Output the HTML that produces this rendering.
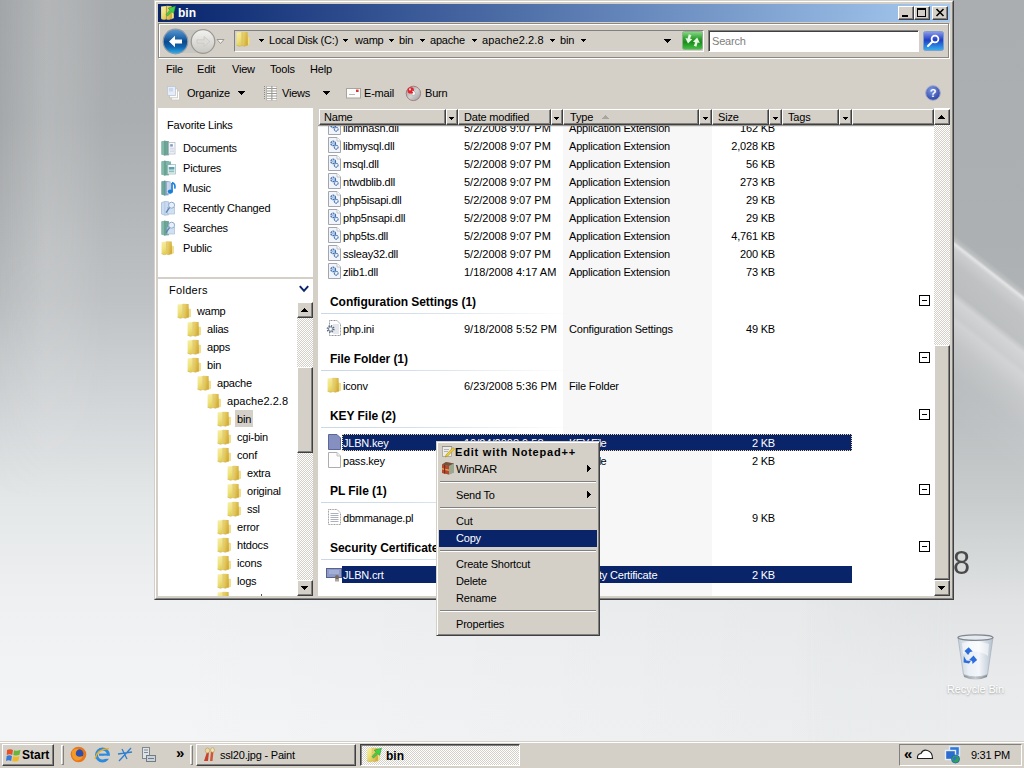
<!DOCTYPE html>
<html><head><meta charset="utf-8"><title>bin</title>
<style>
*{box-sizing:border-box;margin:0;padding:0}
html,body{width:1024px;height:768px;overflow:hidden}
body{position:relative;font-family:"Liberation Sans",sans-serif;font-size:11px;color:#000;letter-spacing:-0.2px;
 background:linear-gradient(180deg,#a8abad 0px,#abaeb0 120px,#b3b6b8 200px,#bfc2c4 300px,#d2d5d7 400px,#e4e7e8 500px,#eef0f1 600px,#f2f4f5 700px,#f3f5f6 768px);}
.a{position:absolute}
.t{position:absolute;white-space:nowrap;line-height:14px;height:14px}
.b{font-weight:bold}
.w{color:#fff}
.r{text-align:right}
#win{position:absolute;left:154px;top:0;width:800px;height:600px;background:#d4d0c8;
 border:1px solid;border-color:#d4d0c8 #404040 #404040 #d4d0c8;}
#win:before{content:"";position:absolute;left:0;top:0;right:0;bottom:0;border:1px solid;border-color:#fff #808080 #808080 #fff}
#title{position:absolute;left:158px;top:4px;width:792px;height:18px;background:linear-gradient(90deg,#0a246a 0%,#0d2a72 4%,#a6caf0 100%)}
.cb{position:absolute;top:6px;width:16px;height:14px;background:#d4d0c8;border:1px solid;border-color:#fff #404040 #404040 #fff;box-shadow:inset -1px -1px 0 #808080}
.btn{position:absolute;background:#d4d0c8;border:1px solid;border-color:#fff #404040 #404040 #fff;box-shadow:inset -1px -1px 0 #808080}
.sunk{position:absolute;border:1px solid;border-color:#808080 #fff #fff #808080}
.sunk2{position:absolute;border:1px solid;border-color:#808080 #fff #fff #808080;box-shadow:inset 1px 1px 0 #404040}
.dither{background-color:#eae8e3;background-image:conic-gradient(#fff 25%,#d4d0c8 0 50%,#fff 0 75%,#d4d0c8 0);background-size:2px 2px}
.hd{position:absolute;top:109px;height:16px;background:#d4d0c8;border:1px solid;border-color:#fff #404040 #404040 #fff;box-shadow:inset -1px -1px 0 #808080}
.arr{position:absolute;width:5px;height:3px;background:linear-gradient(var(--c,#000),var(--c,#000)) 0px 0px/5px 1px no-repeat,linear-gradient(var(--c,#000),var(--c,#000)) 1px 1px/3px 1px no-repeat,linear-gradient(var(--c,#000),var(--c,#000)) 2px 2px/1px 1px no-repeat}
.ad7{position:absolute;width:7px;height:4px;background:linear-gradient(var(--c,#000),var(--c,#000)) 0px 0px/7px 1px no-repeat,linear-gradient(var(--c,#000),var(--c,#000)) 1px 1px/5px 1px no-repeat,linear-gradient(var(--c,#000),var(--c,#000)) 2px 2px/3px 1px no-repeat,linear-gradient(var(--c,#000),var(--c,#000)) 3px 3px/1px 1px no-repeat}
.arru{position:absolute;width:7px;height:4px;background:linear-gradient(var(--c,#000),var(--c,#000)) 3px 0px/1px 1px no-repeat,linear-gradient(var(--c,#000),var(--c,#000)) 2px 1px/3px 1px no-repeat,linear-gradient(var(--c,#000),var(--c,#000)) 1px 2px/5px 1px no-repeat,linear-gradient(var(--c,#000),var(--c,#000)) 0px 3px/7px 1px no-repeat}
.ar4{position:absolute;width:4px;height:7px;background:linear-gradient(#000,#000) 0px 0px/1px 1px no-repeat,linear-gradient(#000,#000) 0px 1px/2px 1px no-repeat,linear-gradient(#000,#000) 0px 2px/3px 1px no-repeat,linear-gradient(#000,#000) 0px 3px/4px 1px no-repeat,linear-gradient(#000,#000) 0px 4px/3px 1px no-repeat,linear-gradient(#000,#000) 0px 5px/2px 1px no-repeat,linear-gradient(#000,#000) 0px 6px/1px 1px no-repeat}
.sel{position:absolute;background:#0a246a;height:17px}
.gl{position:absolute;height:1px;background:linear-gradient(90deg,#c9d8e6 0%,#d5e1ec 40%,rgba(255,255,255,0) 100%)}
.sep{position:absolute;height:2px;border-top:1px solid #808080;border-bottom:1px solid #fff}
svg{position:absolute;overflow:visible}
</style></head><body>
<svg width="0" height="0" style="position:absolute"><defs>
<linearGradient id="gf" x1="0" y1="0" x2="0.3" y2="1"><stop offset="0" stop-color="#f7efa6"/><stop offset="0.6" stop-color="#efe27e"/><stop offset="1" stop-color="#e3d15c"/></linearGradient>
<linearGradient id="gf2" x1="0" y1="0" x2="1" y2="0.4"><stop offset="0" stop-color="#ecd676"/><stop offset="0.5" stop-color="#e2c557"/><stop offset="1" stop-color="#d0aa3a"/></linearGradient>
<symbol id="fold" viewBox="0 0 14 16"><path d="M11 6 H13 Q13.8 6 13.8 7 V13.5 L11 14.5 Z" fill="#efdf88" stroke="#e3cf70" stroke-width="0.4"/><path d="M0.6 1.6 L5.8 0.9 V14.6 L3.5 15.3 L0.6 14.2 Z" fill="url(#gf)"/><path d="M6.2 0.7 L11.6 1 L11.9 14 L8.5 15.2 L6.2 14.7 Z" fill="url(#gf2)"/><path d="M6 0.9 V14.7" stroke="#d2b64a" stroke-width="0.7"/><path d="M0.6 14.2 L3.5 15.3 L5.8 14.6 M6.2 14.7 L8.5 15.2 L11.9 14" stroke="#cdb045" stroke-width="0.6" fill="none"/></symbol>
<symbol id="dll" viewBox="0 0 13 16"><path d="M0.5 0.5 H9 L12.5 4 V15.5 H0.5 Z" fill="#f1f5fb" stroke="#a3a6ac" stroke-width="1"/><path d="M9 0.5 V4 H12.5" fill="#fff" stroke="#b5b8be" stroke-width="0.8"/><circle cx="5.2" cy="6.4" r="2.3" fill="#dfe9f6" stroke="#3d6cab" stroke-width="1.25" stroke-dasharray="1.7 0.6"/><circle cx="5.2" cy="6.4" r="0.8" fill="#fff" stroke="#5d88bf" stroke-width="0.6"/><circle cx="8.2" cy="10.2" r="1.9" fill="#e3ecf7" stroke="#4674b2" stroke-width="1.1" stroke-dasharray="1.5 0.5"/><circle cx="8.2" cy="10.2" r="0.6" fill="#fff"/></symbol>
<symbol id="doc" viewBox="0 0 13 16"><path d="M0.5 0.5 H9 L12.5 4 V15.5 H0.5 Z" fill="#fdfdfd" stroke="#adadad" stroke-width="1"/><path d="M9 0.5 V4 H12.5" fill="#f0f0f0" stroke="#b8b8b8" stroke-width="0.8"/></symbol>
</defs></svg>
<div class="a" style="left:154px;top:600px;width:870px;height:141px;background:linear-gradient(90deg,rgba(0,0,0,0) 0%,rgba(0,0,0,0.02) 50%,rgba(0,0,0,0.045) 100%)"></div>
<div class="a" style="left:804px;top:0;width:220px;height:741px;-webkit-mask-image:linear-gradient(90deg,transparent 0,#000 150px);mask-image:linear-gradient(90deg,transparent 0,#000 150px);background:linear-gradient(180deg,#abaeb0 0px,#adb0b2 240px,#b2b5b7 330px,#b9bcbe 400px,#c9cccd 500px,#d6d9da 560px,#e0e2e3 600px,#e8eaeb 680px,#eaeced 741px)"></div>
<div class="a" style="left:954px;top:0;width:70px;height:741px;background:linear-gradient(218deg,rgba(255,255,255,0) 0%,rgba(255,255,255,0) 36.3%,rgba(255,255,255,0.2) 37.1%,rgba(255,255,255,0.66) 37.5%,rgba(255,255,255,0.36) 38.1%,rgba(255,255,255,0.2) 40%,rgba(255,255,255,0.14) 43.4%,rgba(255,255,255,0.42) 44.4%,rgba(255,255,255,0.3) 46.4%,rgba(255,255,255,0.38) 47.2%,rgba(255,255,255,0.2) 50%,rgba(255,255,255,0.06) 54%,rgba(255,255,255,0) 60%)"></div>
<div class="a" style="left:0;top:0;width:154px;height:500px;background:linear-gradient(90deg,rgba(0,0,0,0.03) 0%,rgba(255,255,255,0.13) 30%,rgba(255,255,255,0.1) 45%,rgba(255,255,255,0) 70%);-webkit-mask-image:linear-gradient(180deg,#000 0%,#000 50%,transparent 100%);mask-image:linear-gradient(180deg,#000 0%,#000 50%,transparent 100%)"></div>
<div class="t " style="left:953px;top:562px;font-size:33px;line-height:33px;height:33px;top:546px;color:#4a4a4a;letter-spacing:0;transform:scaleX(0.93);transform-origin:0 0">8</div>
<svg style="left:957px;top:634px" width="37" height="46" viewBox="0 0 37 46"><defs><linearGradient id="rb" x1="0" y1="0" x2="1" y2="0"><stop offset="0" stop-color="#c3ced9"/><stop offset="0.3" stop-color="#e9eff5"/><stop offset="0.6" stop-color="#f3f6fa"/><stop offset="1" stop-color="#b4c0cd"/></linearGradient><linearGradient id="rbb" x1="0" y1="0" x2="1" y2="0"><stop offset="0" stop-color="#8d9298"/><stop offset="0.5" stop-color="#c9cdd2"/><stop offset="1" stop-color="#7f858c"/></linearGradient></defs><path d="M6.5 40 Q18.5 46.5 30.5 40 L30 43 Q18.5 48 7 43 Z" fill="url(#rbb)"/><path d="M1 3.5 L36 3.5 L30.5 40.5 Q18.5 45.5 6.5 40.5 Z" fill="url(#rb)" stroke="#a9b4c0" stroke-width="0.8"/><path d="M5 9 Q18 5 32 10 L31 22 Q20 14 6 20 Z" fill="#fff" opacity="0.55"/><ellipse cx="18.5" cy="3.6" rx="17.5" ry="2.8" fill="#e4eaf0" stroke="#80868e" stroke-width="1.3"/><path d="M7.5 17 l4.2 -3.8 l4 4.4 l-2.6 0.4 l-2 3 z M16.5 21.5 l3.6 4.6 l-4.6 3.8 l-0.4 -2.8 l-3 -1 z M6.8 22 l2.6 4.6 l4.4 0.4 l-1.8 2.6 l-5.4 -1.2 z" fill="#2c6fdc"/></svg>
<div class="t w" style="left:947px;top:682px;letter-spacing:-0.1px;text-shadow:0 1px 2px rgba(0,0,0,.35)">Recycle Bin</div>
<div id="win"></div>
<div id="title"></div>
<svg style="left:160px;top:5px" width="16" height="16" viewBox="0 0 16 16"><use href="#fold" x="0.5" y="0" width="13.5" height="15.5"/><path d="M6 9.5 L10.2 5.2 L8.2 3.2 L15.4 1.2 L13.6 8.4 L11.8 6.6 L7.6 11 Z" fill="#46d04a" stroke="#2a9a34" stroke-width="0.6"/></svg>
<div class="t b w" style="left:178px;top:6px;font-size:12px;letter-spacing:0">bin</div>
<div class="cb" style="left:898px"><div class="a" style="left:3px;top:8px;width:6px;height:2px;background:#000"></div></div>
<div class="cb" style="left:914px"><div class="a" style="left:2px;top:1px;width:9px;height:9px;border:1px solid #000;border-top-width:2px"></div></div>
<div class="cb" style="left:932px"><svg style="left:3px;top:2px" width="8" height="7" viewBox="0 0 8 7"><path d="M0.5 0 L7.5 7 M7.5 0 L0.5 7" stroke="#000" stroke-width="1.6"/></svg></div>
<div class="a" style="left:159px;top:24px;width:791px;height:35px;border:1px solid #fff"></div>
<div class="a" style="left:158px;top:23px;width:791px;height:35px;border:1px solid #8a8780"></div>
<svg style="left:160px;top:27px" width="72" height="29" viewBox="0 0 72 29">
<defs><linearGradient id="bk" x1="0" y1="0" x2="0" y2="1"><stop offset="0" stop-color="#5b97cf"/><stop offset="0.3" stop-color="#2a6fb3"/><stop offset="0.5" stop-color="#0d4a8a"/><stop offset="0.72" stop-color="#0f63ad"/><stop offset="1" stop-color="#2bb4f0"/></linearGradient>
<linearGradient id="fw" x1="0" y1="0" x2="0" y2="1"><stop offset="0" stop-color="#f2f2f0"/><stop offset="1" stop-color="#c9c7c1"/></linearGradient></defs>
<path d="M15 3 H43 V26 H15 Z" fill="#c8c6c0"/>
<circle cx="15.5" cy="14.5" r="12.3" fill="url(#bk)" stroke="#8e9aa8" stroke-width="1.2"/>
<path d="M9 14.5 L15 8.8 V12.4 H22 V16.6 H15 V20.2 Z" fill="#fff"/>
<circle cx="43" cy="14.5" r="11.8" fill="url(#fw)" stroke="#9b9993" stroke-width="1.3"/>
<path d="M50 14.5 L44 9.5 V12.8 H37 V16.2 H44 V19.5 Z" fill="#dddbd6" stroke="#c4c2bc" stroke-width="0.6"/>
<path d="M57 12.5 H64 L60.5 16.5 Z" fill="#f4f4f2" stroke="#8a8882" stroke-width="0.8"/>
</svg>
<div class="sunk" style="left:234px;top:30px;width:470px;height:22px;background:#d4d0c8"></div>
<svg style="left:236px;top:31px" width="14" height="16"><use href="#fold" width="14" height="16"/></svg>
<div class="t " style="left:269px;top:33px;">Local Disk (C:)</div>
<div class="t " style="left:355px;top:33px;">wamp</div>
<div class="t " style="left:399px;top:33px;">bin</div>
<div class="t " style="left:430px;top:33px;">apache</div>
<div class="t " style="left:482px;top:33px;letter-spacing:0.1px">apache2.2.8</div>
<div class="t " style="left:560px;top:33px;">bin</div>
<div class="arr" style="left:259px;top:39px"></div>
<div class="arr" style="left:343px;top:39px"></div>
<div class="arr" style="left:389px;top:39px"></div>
<div class="arr" style="left:420px;top:39px"></div>
<div class="arr" style="left:472px;top:39px"></div>
<div class="arr" style="left:550px;top:39px"></div>
<div class="arr" style="left:581px;top:39px"></div>
<div class="ad7" style="left:664px;top:39px"></div>
<svg style="left:682px;top:31px" width="21" height="19" viewBox="0 0 21 19"><defs><linearGradient id="gr" x1="0" y1="0" x2="0" y2="1"><stop offset="0" stop-color="#8adb88"/><stop offset="0.4" stop-color="#2f9f30"/><stop offset="0.6" stop-color="#1c8c1e"/><stop offset="1" stop-color="#44c644"/></linearGradient></defs><rect x="0.5" y="0.5" width="20" height="18" rx="2" fill="url(#gr)" stroke="#8fb08a"/><path d="M6.8 3.2 L9.4 4.2 L8 7.6 L10.2 8.2 L6 12.4 L3.4 7 L5.6 7.4 Z M14.4 15.8 L11.8 14.8 L13.2 11.4 L11 10.8 L15.2 6.6 L17.8 12 L15.6 11.6 Z" fill="#e9f8e4"/></svg>
<div class="sunk2" style="left:708px;top:30px;width:211px;height:22px;background:#fff"></div>
<div class="t " style="left:712px;top:34px;color:#808080">Search</div>
<svg style="left:923px;top:31px" width="21" height="20" viewBox="0 0 21 20"><defs><linearGradient id="sb" x1="0" y1="0" x2="0" y2="1"><stop offset="0" stop-color="#8f9de8"/><stop offset="0.45" stop-color="#1f3fc4"/><stop offset="1" stop-color="#36b4ee"/></linearGradient></defs><rect x="0.5" y="0.5" width="20" height="19" rx="2" fill="url(#sb)" stroke="#7f9fd0"/><circle cx="12" cy="8" r="3.4" fill="none" stroke="#fff" stroke-width="1.8"/><path d="M9.5 10.5 L5 15" stroke="#fff" stroke-width="2.2" stroke-linecap="round"/></svg>
<div class="t " style="left:166px;top:62px;">File</div>
<div class="t " style="left:197px;top:62px;">Edit</div>
<div class="t " style="left:232px;top:62px;">View</div>
<div class="t " style="left:270px;top:62px;">Tools</div>
<div class="t " style="left:310px;top:62px;">Help</div>
<svg style="left:166px;top:85px" width="16" height="16" viewBox="0 0 16 16"><rect x="5.5" y="6" width="8" height="9" fill="#fff" stroke="#c9c6be" stroke-width="0.8"/><rect x="3.5" y="3.8" width="8" height="9" fill="#fdfdfd" stroke="#c4c2bc" stroke-width="0.8"/><rect x="1.5" y="1.5" width="8" height="9" fill="#e6edf6" stroke="#bcc6d4" stroke-width="0.8"/><rect x="3" y="3" width="4" height="3.5" fill="#c9d8ec"/></svg>
<div class="t " style="left:187px;top:86px;">Organize</div>
<div class="ad7" style="left:238px;top:91px"></div>
<svg style="left:263px;top:85px" width="16" height="16" viewBox="0 0 16 16"><path d="M1.5 1 V15" stroke="#8a8a8a" stroke-width="1" stroke-dasharray="1 1"/><rect x="3.5" y="1" width="10.5" height="14.5" fill="#9b9993"/><g stroke="#fff" stroke-width="1.5"><path d="M4 2.2 H8.3 M9.4 2.2 H13.6 M4 4.7 H8.3 M9.4 4.7 H13.6 M4 7.2 H8.3 M9.4 7.2 H13.6 M4 9.7 H8.3 M9.4 9.7 H13.6 M4 12.2 H8.3 M9.4 12.2 H13.6 M4 14.6 H8.3 M9.4 14.6 H13.6"/></g></svg>
<div class="t " style="left:282px;top:86px;">Views</div>
<div class="ad7" style="left:323px;top:91px"></div>
<svg style="left:346px;top:88px" width="15" height="11" viewBox="0 0 15 11"><rect x="0.5" y="0.5" width="14" height="9.5" fill="#fcfcfc" stroke="#a7a49c"/><rect x="10" y="1.6" width="2.6" height="2.4" fill="#d8323a"/><path d="M3 6.5 H9" stroke="#b9b6b0" stroke-width="1"/></svg>
<div class="t " style="left:364px;top:86px;">E-mail</div>
<svg style="left:405px;top:85px" width="17" height="17" viewBox="0 0 17 17"><defs><linearGradient id="cd" x1="0" y1="0" x2="1" y2="1"><stop offset="0" stop-color="#8f8f8f"/><stop offset="0.5" stop-color="#d2d2d2"/><stop offset="1" stop-color="#9a9a9a"/></linearGradient></defs><circle cx="8.4" cy="8.4" r="7.2" fill="url(#cd)" stroke="#a06a6a" stroke-width="0.8"/><circle cx="8.4" cy="8.4" r="2" fill="#f2f2f2" stroke="#9c9c9c" stroke-width="0.6"/><circle cx="5.8" cy="5.4" r="3.2" fill="#e3232c"/><circle cx="5" cy="4.4" r="1.1" fill="#fbd0d0"/><path d="M7.5 6 Q9.5 7 8.6 9.5" stroke="#fff" stroke-width="1.2" fill="none"/></svg>
<div class="t " style="left:425px;top:86px;">Burn</div>
<svg style="left:925px;top:85px" width="16" height="16" viewBox="0 0 16 16"><defs><radialGradient id="hp" cx="0.4" cy="0.3" r="0.8"><stop offset="0" stop-color="#7f97e0"/><stop offset="1" stop-color="#1f3aa0"/></radialGradient></defs><circle cx="8" cy="8" r="7.3" fill="url(#hp)" stroke="#9aa6cc" stroke-width="1"/><text x="8" y="12" text-anchor="middle" font-family="Liberation Sans,sans-serif" font-weight="bold" font-size="11" fill="#fff" letter-spacing="0">?</text></svg>
<div class="a" style="left:158px;top:108px;width:155px;height:488px;background:#fff"></div>
<div class="t " style="left:167px;top:118px;">Favorite Links</div>
<div class="t " style="left:183px;top:141px;">Documents</div>
<svg style="left:161px;top:140px" width="15" height="16" viewBox="0 0 15 16"><path d="M0.5 1.6 L3.8 0.7 L7.6 1.2 V15.2 L3.8 15.6 L0.5 14.4 Z" fill="#6fa89a"/><path d="M0.5 1.6 L3.8 0.7 V15.6 L0.5 14.4 Z" fill="#82b8aa"/><path d="M3.8 0.7 V15.6" stroke="#5a9183" stroke-width="0.7"/><path d="M7.3 1.2 V15.2" stroke="#558a7d" stroke-width="0.7"/><rect x="7.8" y="2.5" width="6.2" height="11.5" fill="#fbfcfe" stroke="#b3bcc8" stroke-width="0.8"/><rect x="9.2" y="4.2" width="2.6" height="2.4" fill="#7f97c4"/><path d="M9 8.2H13M9 10H13M9 11.8H13" stroke="#b7c3d6" stroke-width="0.8"/></svg>
<div class="t " style="left:183px;top:161px;">Pictures</div>
<svg style="left:161px;top:160px" width="15" height="16" viewBox="0 0 15 16"><path d="M0.5 1.6 L3.8 0.7 L7.6 1.2 V15.2 L3.8 15.6 L0.5 14.4 Z" fill="#6fa89a"/><path d="M0.5 1.6 L3.8 0.7 V15.6 L0.5 14.4 Z" fill="#82b8aa"/><path d="M3.8 0.7 V15.6" stroke="#5a9183" stroke-width="0.7"/><path d="M7.3 1.2 V15.2" stroke="#558a7d" stroke-width="0.7"/><rect x="6.8" y="4.5" width="7.7" height="9.5" fill="#f3f8fb" stroke="#9dbfc0" stroke-width="0.8"/><rect x="5" y="1.5" width="5" height="3.5" fill="#7fb5ac"/><rect x="7.8" y="7" width="5.6" height="2.6" fill="#5f9fb0"/><rect x="7.8" y="10.4" width="5.6" height="2" fill="#8fc0b6"/></svg>
<div class="t " style="left:183px;top:181px;">Music</div>
<svg style="left:161px;top:180px" width="15" height="16" viewBox="0 0 15 16"><path d="M0.5 1.6 L3.8 0.7 L7.6 1.2 V15.2 L3.8 15.6 L0.5 14.4 Z" fill="#7fa8c8"/><path d="M0.5 1.6 L3.8 0.7 V15.6 L0.5 14.4 Z" fill="#6fa89a"/><path d="M3.8 0.7 V15.6" stroke="#5a9183" stroke-width="0.7"/><rect x="5.6" y="1.8" width="3.6" height="12" fill="#c9d6ea" stroke="#8fa3c4" stroke-width="0.6"/><path d="M11 3 V11.5" stroke="#1b7ed8" stroke-width="1.7"/><ellipse cx="9.4" cy="11.6" rx="2.6" ry="2.1" fill="#1b7ed8"/><path d="M11 2.6 Q14.8 4 13.8 8.6" stroke="#1b7ed8" stroke-width="1.6" fill="none"/></svg>
<div class="t " style="left:183px;top:201px;">Recently Changed</div>
<svg style="left:161px;top:200px" width="15" height="16" viewBox="0 0 15 16"><path d="M0.5 2.6 L3.8 1.4 L7.6 1.8 V14.8 L3.8 15.2 L0.5 14 Z" fill="#c9dbf0" stroke="#9db5d6" stroke-width="0.7"/><path d="M3.8 1.4 V15.2" stroke="#a9c0de" stroke-width="0.7"/><rect x="6.5" y="7.5" width="7" height="6.5" fill="#cfe0f2" stroke="#a5bcd8" stroke-width="0.7"/><circle cx="10.6" cy="5.2" r="3" fill="#e6f0fa" stroke="#8fa9cc" stroke-width="1"/><path d="M8.6 7.6 L5 12.6" stroke="#5f7fae" stroke-width="1.3"/></svg>
<div class="t " style="left:183px;top:221px;">Searches</div>
<svg style="left:161px;top:220px" width="15" height="16" viewBox="0 0 15 16"><path d="M0.5 1.6 L3.8 0.7 L7.6 1.2 V15.2 L3.8 15.6 L0.5 14.4 Z" fill="#6fa89a"/><path d="M0.5 1.6 L3.8 0.7 V15.6 L0.5 14.4 Z" fill="#82b8aa"/><path d="M3.8 0.7 V15.6" stroke="#5a9183" stroke-width="0.7"/><path d="M7.3 1.2 V15.2" stroke="#558a7d" stroke-width="0.7"/><rect x="6.5" y="7.5" width="7" height="6.5" fill="#cfe0f2" stroke="#a5bcd8" stroke-width="0.7"/><circle cx="10.6" cy="5.2" r="3" fill="#e6f0fa" stroke="#8fa9cc" stroke-width="1"/><path d="M8.6 7.6 L5 12.6" stroke="#5f7fae" stroke-width="1.3"/></svg>
<div class="t " style="left:183px;top:241px;">Public</div>
<svg style="left:161px;top:240px" width="13" height="16"><use href="#fold" width="13" height="16"/></svg>
<div class="a" style="left:158px;top:277px;width:155px;height:2px;background:#d4d0c8"></div>
<div class="t " style="left:169px;top:283px;letter-spacing:0.3px">Folders</div>
<svg style="left:299px;top:285px" width="10" height="8" viewBox="0 0 10 8"><path d="M0.8 1.2 L5 5.8 L9.2 1.2" fill="none" stroke="#0a246a" stroke-width="2"/></svg>
<div class="a" style="left:235px;top:410px;width:18px;height:17px;background:#d4d0c8"></div>
<svg style="left:177px;top:303px" width="14" height="16"><use href="#fold" width="14" height="16"/></svg>
<div class="t " style="left:197px;top:304px;">wamp</div>
<svg style="left:187px;top:321px" width="14" height="16"><use href="#fold" width="14" height="16"/></svg>
<div class="t " style="left:207px;top:322px;">alias</div>
<svg style="left:187px;top:339px" width="14" height="16"><use href="#fold" width="14" height="16"/></svg>
<div class="t " style="left:207px;top:340px;">apps</div>
<svg style="left:187px;top:357px" width="14" height="16"><use href="#fold" width="14" height="16"/></svg>
<div class="t " style="left:207px;top:358px;">bin</div>
<svg style="left:197px;top:375px" width="14" height="16"><use href="#fold" width="14" height="16"/></svg>
<div class="t " style="left:217px;top:376px;">apache</div>
<svg style="left:207px;top:393px" width="14" height="16"><use href="#fold" width="14" height="16"/></svg>
<div class="t " style="left:227px;top:394px;letter-spacing:0.05px">apache2.2.8</div>
<svg style="left:217px;top:411px" width="14" height="16"><use href="#fold" width="14" height="16"/></svg>
<div class="t " style="left:237px;top:412px;">bin</div>
<svg style="left:217px;top:429px" width="14" height="16"><use href="#fold" width="14" height="16"/></svg>
<div class="t " style="left:237px;top:430px;">cgi-bin</div>
<svg style="left:217px;top:447px" width="14" height="16"><use href="#fold" width="14" height="16"/></svg>
<div class="t " style="left:237px;top:448px;">conf</div>
<svg style="left:227px;top:465px" width="14" height="16"><use href="#fold" width="14" height="16"/></svg>
<div class="t " style="left:247px;top:466px;">extra</div>
<svg style="left:227px;top:483px" width="14" height="16"><use href="#fold" width="14" height="16"/></svg>
<div class="t " style="left:247px;top:484px;">original</div>
<svg style="left:227px;top:501px" width="14" height="16"><use href="#fold" width="14" height="16"/></svg>
<div class="t " style="left:247px;top:502px;">ssl</div>
<svg style="left:217px;top:519px" width="14" height="16"><use href="#fold" width="14" height="16"/></svg>
<div class="t " style="left:237px;top:520px;">error</div>
<svg style="left:217px;top:537px" width="14" height="16"><use href="#fold" width="14" height="16"/></svg>
<div class="t " style="left:237px;top:538px;">htdocs</div>
<svg style="left:217px;top:555px" width="14" height="16"><use href="#fold" width="14" height="16"/></svg>
<div class="t " style="left:237px;top:556px;">icons</div>
<svg style="left:217px;top:573px" width="14" height="16"><use href="#fold" width="14" height="16"/></svg>
<div class="t " style="left:237px;top:574px;">logs</div>
<div class="a" style="left:217px;top:591px;width:14px;height:5px;overflow:hidden"><svg style="left:0;top:0" width="14" height="16"><use href="#fold" width="14" height="16"/></svg></div>
<div class="a" style="left:261px;top:594px;width:1px;height:2px;background:#555"></div>
<div class="a dither" style="left:297px;top:302px;width:16px;height:294px"></div>
<div class="btn" style="left:297px;top:302px;width:16px;height:16px"><div class="arru" style="left:3px;top:5px"></div></div>
<div class="btn" style="left:297px;top:367px;width:16px;height:86px"></div>
<div class="btn" style="left:297px;top:580px;width:16px;height:16px"><div class="ad7" style="left:3px;top:5px"></div></div>
<div class="a" style="left:318px;top:108px;width:632px;height:488px;background:#fff"></div>
<div class="a" style="left:563px;top:125px;width:149px;height:471px;background:#f7f7f7"></div>
<div class="sel" style="left:342px;top:434px;width:510px;outline:1px dotted #f5dB95;outline-offset:-1px"></div>
<div class="sel" style="left:342px;top:566px;width:510px"></div>
<svg style="left:328px;top:119px" width="13" height="16"><use href="#dll" width="13" height="16"/></svg>
<div class="t " style="left:343px;top:121px;">libmhash.dll</div>
<div class="t " style="left:464px;top:121px;letter-spacing:0">5/2/2008 9:07 PM</div>
<div class="t " style="left:569px;top:121px;">Application Extension</div>
<div class="t r " style="left:700px;width:75px;top:121px">162 KB</div>
<svg style="left:328px;top:137px" width="13" height="16"><use href="#dll" width="13" height="16"/></svg>
<div class="t " style="left:343px;top:139px;">libmysql.dll</div>
<div class="t " style="left:464px;top:139px;letter-spacing:0">5/2/2008 9:07 PM</div>
<div class="t " style="left:569px;top:139px;">Application Extension</div>
<div class="t r " style="left:700px;width:75px;top:139px">2,028 KB</div>
<svg style="left:328px;top:155px" width="13" height="16"><use href="#dll" width="13" height="16"/></svg>
<div class="t " style="left:343px;top:157px;">msql.dll</div>
<div class="t " style="left:464px;top:157px;letter-spacing:0">5/2/2008 9:07 PM</div>
<div class="t " style="left:569px;top:157px;">Application Extension</div>
<div class="t r " style="left:700px;width:75px;top:157px">56 KB</div>
<svg style="left:328px;top:173px" width="13" height="16"><use href="#dll" width="13" height="16"/></svg>
<div class="t " style="left:343px;top:175px;">ntwdblib.dll</div>
<div class="t " style="left:464px;top:175px;letter-spacing:0">5/2/2008 9:07 PM</div>
<div class="t " style="left:569px;top:175px;">Application Extension</div>
<div class="t r " style="left:700px;width:75px;top:175px">273 KB</div>
<svg style="left:328px;top:191px" width="13" height="16"><use href="#dll" width="13" height="16"/></svg>
<div class="t " style="left:343px;top:193px;">php5isapi.dll</div>
<div class="t " style="left:464px;top:193px;letter-spacing:0">5/2/2008 9:07 PM</div>
<div class="t " style="left:569px;top:193px;">Application Extension</div>
<div class="t r " style="left:700px;width:75px;top:193px">29 KB</div>
<svg style="left:328px;top:209px" width="13" height="16"><use href="#dll" width="13" height="16"/></svg>
<div class="t " style="left:343px;top:211px;">php5nsapi.dll</div>
<div class="t " style="left:464px;top:211px;letter-spacing:0">5/2/2008 9:07 PM</div>
<div class="t " style="left:569px;top:211px;">Application Extension</div>
<div class="t r " style="left:700px;width:75px;top:211px">29 KB</div>
<svg style="left:328px;top:227px" width="13" height="16"><use href="#dll" width="13" height="16"/></svg>
<div class="t " style="left:343px;top:229px;">php5ts.dll</div>
<div class="t " style="left:464px;top:229px;letter-spacing:0">5/2/2008 9:07 PM</div>
<div class="t " style="left:569px;top:229px;">Application Extension</div>
<div class="t r " style="left:700px;width:75px;top:229px">4,761 KB</div>
<svg style="left:328px;top:245px" width="13" height="16"><use href="#dll" width="13" height="16"/></svg>
<div class="t " style="left:343px;top:247px;">ssleay32.dll</div>
<div class="t " style="left:464px;top:247px;letter-spacing:0">5/2/2008 9:07 PM</div>
<div class="t " style="left:569px;top:247px;">Application Extension</div>
<div class="t r " style="left:700px;width:75px;top:247px">200 KB</div>
<svg style="left:328px;top:263px" width="13" height="16"><use href="#dll" width="13" height="16"/></svg>
<div class="t " style="left:343px;top:265px;">zlib1.dll</div>
<div class="t " style="left:464px;top:265px;letter-spacing:0">1/18/2008 4:17 AM</div>
<div class="t " style="left:569px;top:265px;">Application Extension</div>
<div class="t r " style="left:700px;width:75px;top:265px">73 KB</div>
<svg style="left:326px;top:320px" width="16" height="16" viewBox="0 0 16 16"><path d="M3.5 0.5 H11 L14.5 4 V15.5 H3.5 Z" fill="#fff" stroke="#8e949c" stroke-dasharray="1 0.5"/><path d="M7 5H13M7 7H13M7 9H13M7 11H13M7 13H13" stroke="#c3c9d3" stroke-width="0.9"/><circle cx="4.6" cy="9" r="3" fill="#eef1f5" stroke="#55657c" stroke-width="1.9" stroke-dasharray="1.2 1.15"/><circle cx="4.6" cy="9" r="2.2" fill="#dfe5ec" stroke="#6b7a90" stroke-width="0.8"/><circle cx="4.6" cy="9" r="0.9" fill="#fff"/></svg>
<div class="t " style="left:343px;top:322px;">php.ini</div>
<div class="t " style="left:464px;top:322px;letter-spacing:0">9/18/2008 5:52 PM</div>
<div class="t " style="left:569px;top:322px;">Configuration Settings</div>
<div class="t r " style="left:700px;width:75px;top:322px">49 KB</div>
<svg style="left:327px;top:377px" width="14" height="16"><use href="#fold" width="14" height="16"/></svg>
<div class="t " style="left:343px;top:379px;">iconv</div>
<div class="t " style="left:464px;top:379px;letter-spacing:0">6/23/2008 5:36 PM</div>
<div class="t " style="left:569px;top:379px;">File Folder</div>
<svg style="left:328px;top:434px" width="13" height="16" viewBox="0 0 13 16"><path d="M0.5 0.5 H9 L12.5 4 V15.5 H0.5 Z" fill="#8590c0" stroke="#5b6699"/></svg>
<div class="t w" style="left:343px;top:436px;">JLBN.key</div>
<div class="t w" style="left:464px;top:436px;letter-spacing:0">10/24/2008 9:58 ...</div>
<div class="t w" style="left:569px;top:436px;letter-spacing:-0.7px">KEY File</div>
<div class="t r w" style="left:700px;width:75px;top:436px">2 KB</div>
<svg style="left:328px;top:452px" width="13" height="16"><use href="#doc" width="13" height="16"/></svg>
<div class="t " style="left:343px;top:454px;">pass.key</div>
<div class="t " style="left:464px;top:454px;letter-spacing:0">10/24/2008 9:58 ...</div>
<div class="t " style="left:569px;top:454px;letter-spacing:-0.7px">KEY File</div>
<div class="t r " style="left:700px;width:75px;top:454px">2 KB</div>
<svg style="left:328px;top:509px" width="13" height="16" viewBox="0 0 13 16"><path d="M0.5 0.5 H9 L12.5 4 V15.5 H0.5 Z" fill="#fff" stroke="#9a9a9a" stroke-dasharray="1 0.6"/><path d="M2.5 4.5H10.5M2.5 6.5H10.5M2.5 8.5H10.5M2.5 10.5H10.5M2.5 12.5H10.5" stroke="#a3a9b3" stroke-width="0.9"/></svg>
<div class="t " style="left:343px;top:511px;">dbmmanage.pl</div>
<div class="t " style="left:464px;top:511px;letter-spacing:0">5/2/2008 9:07 PM</div>
<div class="t " style="left:569px;top:511px;letter-spacing:-0.7px">PL File</div>
<div class="t r " style="left:700px;width:75px;top:511px">9 KB</div>
<svg style="left:326px;top:568px" width="16" height="14" viewBox="0 0 16 14"><rect x="0.5" y="0.5" width="15" height="9" fill="#8e9bc8" stroke="#56618f"/><path d="M3 3H13M3 5H13" stroke="#c5cde8" stroke-width="0.8"/><circle cx="11" cy="9" r="2" fill="#7a6a5a"/><path d="M10 10 V13.5 M12 10 V13.5" stroke="#5a4a3a" stroke-width="1"/></svg>
<div class="t w" style="left:343px;top:568px;">JLBN.crt</div>
<div class="t w" style="left:464px;top:568px;letter-spacing:0">10/24/2008 9:58 ...</div>
<div class="t w" style="left:569px;top:568px;">Security Certificate</div>
<div class="t r w" style="left:700px;width:75px;top:568px">2 KB</div>
<div class="t b" style="left:330px;top:295px;font-size:12px;letter-spacing:-0.05px">Configuration Settings (1)</div>
<div class="gl" style="left:321px;top:313px;width:250px"></div>
<div class="a" style="left:919px;top:295px;width:11px;height:11px;border:1px solid #000;background:#fff"><div class="a" style="left:2px;top:4px;width:5px;height:1px;background:#000"></div></div>
<div class="t b" style="left:330px;top:352px;font-size:12px;letter-spacing:-0.05px">File Folder (1)</div>
<div class="gl" style="left:321px;top:370px;width:250px"></div>
<div class="a" style="left:919px;top:352px;width:11px;height:11px;border:1px solid #000;background:#fff"><div class="a" style="left:2px;top:4px;width:5px;height:1px;background:#000"></div></div>
<div class="t b" style="left:330px;top:409px;font-size:12px;letter-spacing:-0.05px">KEY File (2)</div>
<div class="gl" style="left:321px;top:427px;width:250px"></div>
<div class="a" style="left:919px;top:409px;width:11px;height:11px;border:1px solid #000;background:#fff"><div class="a" style="left:2px;top:4px;width:5px;height:1px;background:#000"></div></div>
<div class="t b" style="left:330px;top:484px;font-size:12px;letter-spacing:-0.05px">PL File (1)</div>
<div class="gl" style="left:321px;top:502px;width:250px"></div>
<div class="a" style="left:919px;top:484px;width:11px;height:11px;border:1px solid #000;background:#fff"><div class="a" style="left:2px;top:4px;width:5px;height:1px;background:#000"></div></div>
<div class="t b" style="left:330px;top:541px;font-size:12px;letter-spacing:-0.05px">Security Certificate (1)</div>
<div class="gl" style="left:321px;top:559px;width:250px"></div>
<div class="a" style="left:919px;top:541px;width:11px;height:11px;border:1px solid #000;background:#fff"><div class="a" style="left:2px;top:4px;width:5px;height:1px;background:#000"></div></div>
<div class="a" style="left:318px;top:108px;width:616px;height:18px;background:#d4d0c8"></div>
<div class="hd" style="left:319px;width:127px"></div>
<div class="hd" style="left:446px;width:12px"><div class="arr" style="left:2px;top:7px"></div></div>
<div class="t " style="left:324px;top:110px;">Name</div>
<div class="hd" style="left:458px;width:93px"></div>
<div class="hd" style="left:551px;width:12px"><div class="arr" style="left:2px;top:7px"></div></div>
<div class="t " style="left:464px;top:110px;">Date modified</div>
<div class="hd" style="left:563px;width:136px"></div>
<div class="hd" style="left:699px;width:13px"><div class="arr" style="left:3px;top:7px"></div></div>
<div class="t " style="left:570px;top:110px;">Type</div>
<div class="hd" style="left:712px;width:57px"></div>
<div class="hd" style="left:769px;width:13px"><div class="arr" style="left:3px;top:7px"></div></div>
<div class="t " style="left:718px;top:110px;">Size</div>
<div class="hd" style="left:782px;width:57px"></div>
<div class="hd" style="left:839px;width:13px"><div class="arr" style="left:3px;top:7px"></div></div>
<div class="t " style="left:788px;top:110px;">Tags</div>
<div class="hd" style="left:852px;width:82px"></div>
<div class="arru" style="left:602px;top:115px;--c:#a8a6a0"></div>
<div class="a" style="left:318px;top:125px;width:616px;height:2px;background:linear-gradient(180deg,rgba(0,0,0,.35),rgba(0,0,0,0))"></div>
<div class="a dither" style="left:934px;top:109px;width:16px;height:487px"></div>
<div class="btn" style="left:934px;top:109px;width:16px;height:16px"><div class="arru" style="left:3px;top:5px"></div></div>
<div class="btn" style="left:934px;top:345px;width:16px;height:235px"></div>
<div class="btn" style="left:934px;top:580px;width:16px;height:16px"><div class="ad7" style="left:3px;top:5px"></div></div>
<div class="a" style="left:436px;top:441px;width:164px;height:195px;background:#d4d0c8;border:1px solid;border-color:#d4d0c8 #404040 #404040 #d4d0c8;box-shadow:inset 1px 1px 0 #fff,inset -1px -1px 0 #808080"></div>
<div class="a" style="left:439px;top:530px;width:158px;height:17px;background:#0a246a"></div>
<div class="t b" style="left:455px;top:445px;letter-spacing:0.8px">Edit with Notepad++</div>
<div class="t " style="left:456px;top:462px;">WinRAR</div>
<div class="t " style="left:456px;top:488px;">Send To</div>
<div class="t " style="left:456px;top:514px;">Cut</div>
<div class="t w" style="left:456px;top:531px;">Copy</div>
<div class="t " style="left:456px;top:557px;">Create Shortcut</div>
<div class="t " style="left:456px;top:574px;">Delete</div>
<div class="t " style="left:456px;top:591px;">Rename</div>
<div class="t " style="left:456px;top:617px;">Properties</div>
<div class="sep" style="left:440px;top:481px;width:156px"></div>
<div class="sep" style="left:440px;top:507px;width:156px"></div>
<div class="sep" style="left:440px;top:550px;width:156px"></div>
<div class="sep" style="left:440px;top:610px;width:156px"></div>
<div class="ar4" style="left:587px;top:465px"></div>
<div class="ar4" style="left:587px;top:491px"></div>
<svg style="left:441px;top:444px" width="14" height="14" viewBox="0 0 14 14"><rect x="1.5" y="2.5" width="9" height="10" fill="#ecebe4" stroke="#a3a196" stroke-width="0.8"/><path d="M1.5 2.5 h9" stroke="#777" stroke-dasharray="1 1"/><path d="M3 5.5H8M3 7.5H7" stroke="#9a9ab0" stroke-width="0.7"/><path d="M5 11 L12 3.5 L13.5 5 L6.5 12.2 L4.3 13 Z" fill="#f0d232" stroke="#a58a1c" stroke-width="0.6"/></svg>
<svg style="left:441px;top:461px" width="14" height="14" viewBox="0 0 14 14"><path d="M1 3.5 L5 1 L13 2.5 V11.5 L8 13.5 L1 12 Z" fill="#8c9a86"/><path d="M1 3.5 L8 5 V13.5 L1 12 Z" fill="#b8472b"/><path d="M1 3.5 L5 1 L13 2.5 L8 5 Z" fill="#7a5038"/><path d="M1 7 L8 8.5 V10 L1 8.5 Z" fill="#e0a060"/><path d="M3.6 4 V12.6" stroke="#7c2f1c" stroke-width="1.2"/><path d="M8 5 L13 2.5 V11.5 L8 13.5 Z" fill="#9aa890"/></svg>
<div class="a" style="left:0;top:741px;width:1024px;height:27px;background:#d4d0c8;border-top:1px solid #d4d0c8;box-shadow:inset 0 1px 0 #fff"></div>
<div class="btn" style="left:2px;top:744px;width:52px;height:22px"></div>
<svg style="left:6px;top:747px" width="16" height="16" viewBox="0 0 16 16"><path d="M1 3 Q4 1.5 7 3 L6.2 8 Q3.5 6.7 0.8 8 Z" fill="#e5522a"/><path d="M8 3.2 Q11 4.5 14.5 2.8 L13.5 7.8 Q10.5 9.3 7.3 8 Z" fill="#6bb43a"/><path d="M0.7 9 Q3.3 7.7 6 9 L5.2 14 Q2.5 12.7 0 14 Z" fill="#3a78d6"/><path d="M7.1 9.2 Q10 10.5 13.3 8.9 L12.5 13.8 Q9.5 15.3 6.3 14 Z" fill="#f2b820"/></svg>
<div class="t b" style="left:22px;top:748px;font-size:12px;letter-spacing:0">Start</div>
<div class="a" style="left:61px;top:745px;width:3px;height:20px;border:1px solid;border-color:#fff #808080 #808080 #fff"></div>
<svg style="left:70px;top:746px" width="17" height="17" viewBox="0 0 17 17"><circle cx="8.5" cy="8.5" r="7.8" fill="#e8761a"/><circle cx="8.8" cy="7.8" r="4.6" fill="#2a4fb0"/><path d="M2 5 Q5 2 9 3 Q5 5 6 9 Q8 12 13 10 Q11 15 6 14.5 Q1 12 2 5Z" fill="#f19a2a"/></svg>
<svg style="left:94px;top:746px" width="17" height="17" viewBox="0 0 17 17"><circle cx="8.5" cy="9" r="6" fill="none" stroke="#2c8ae0" stroke-width="3"/><rect x="5" y="7.6" width="9" height="2.2" fill="#2c8ae0"/><rect x="10" y="9.8" width="6" height="3" fill="#d4d0c8"/><path d="M1 13 Q3 3 15 2.5" fill="none" stroke="#f0b020" stroke-width="1.4"/></svg>
<svg style="left:117px;top:746px" width="17" height="17" viewBox="0 0 17 17"><path d="M2 15 L14 2 M1 8 L15 6 M5 3 L10 13" stroke="#2f7fd0" stroke-width="1.3" fill="none"/></svg>
<svg style="left:140px;top:746px" width="17" height="17" viewBox="0 0 17 17"><rect x="2.5" y="1.5" width="7" height="11" fill="#dfe3e6" stroke="#7e8a92"/><path d="M4 4H8M4 6.5H8" stroke="#7e8a92"/><rect x="6.5" y="9.5" width="9" height="6" fill="#c9d2d8" stroke="#6f7c86"/><path d="M8 12.5H14" stroke="#6f7c86"/></svg>
<div class="t b" style="left:176px;top:746px;font-size:15px;letter-spacing:0">»</div>
<div class="a" style="left:190px;top:745px;width:3px;height:20px;border:1px solid;border-color:#fff #808080 #808080 #fff"></div>
<div class="btn" style="left:196px;top:744px;width:160px;height:22px"></div>
<svg style="left:201px;top:747px" width="16" height="16" viewBox="0 0 16 16"><path d="M3 14 L6 5 L8 5 L7 14 Z" fill="#c8402a"/><path d="M9 14 L10 4 L12.5 4 L11.5 14Z" fill="#d0562f"/><ellipse cx="6.5" cy="3.5" rx="2.2" ry="2.5" fill="#f0d9a0" stroke="#b89a50" stroke-width="0.6"/><ellipse cx="11.5" cy="3" rx="2" ry="2.3" fill="#f3e2b5" stroke="#b89a50" stroke-width="0.6"/></svg>
<div class="t " style="left:220px;top:748px;">ssl20.jpg - Paint</div>
<div class="a dither" style="left:360px;top:744px;width:160px;height:22px;border:1px solid;border-color:#404040 #fff #fff #404040;box-shadow:inset 1px 1px 0 #808080"></div>
<svg style="left:366px;top:747px" width="16" height="16" viewBox="0 0 16 16"><use href="#fold" x="0.5" y="0" width="13.5" height="15.5"/><path d="M6 9.5 L10.2 5.2 L8.2 3.2 L15.4 1.2 L13.6 8.4 L11.8 6.6 L7.6 11 Z" fill="#46d04a" stroke="#2a9a34" stroke-width="0.6"/></svg>
<div class="t b" style="left:386px;top:749px;font-size:12px;letter-spacing:0">bin</div>
<div class="a" style="left:899px;top:744px;width:123px;height:22px;border:1px solid;border-color:#808080 #fff #fff #808080"></div>
<div class="t b" style="left:904px;top:747px;font-size:15px;letter-spacing:0">«</div>
<svg style="left:916px;top:748px" width="18" height="12" viewBox="0 0 18 12"><path d="M1.5 10.5 Q1 6 5 5.5 Q7 1 11.5 2.5 Q16.5 4 16.5 10.5 Z" fill="#fff" stroke="#222" stroke-width="1.2"/></svg>
<svg style="left:944px;top:745px" width="18" height="19" viewBox="0 0 18 19"><rect x="5.5" y="1.5" width="10" height="9" fill="#2f78d8" stroke="#dfe8f4" stroke-width="1.4"/><rect x="1.5" y="5.5" width="10" height="9" fill="#2a6cd0" stroke="#e8eef8" stroke-width="1.4"/><circle cx="11.5" cy="14" r="4" fill="#2fa64a" stroke="#1d5fc0" stroke-width="0.8"/><path d="M9 13 Q11 11 13.5 12.5 Q12 15 9.5 16Z" fill="#2f6fe0"/></svg>
<div class="t " style="left:971px;top:748px;letter-spacing:-0.3px">9:31 PM</div>
</body></html>
